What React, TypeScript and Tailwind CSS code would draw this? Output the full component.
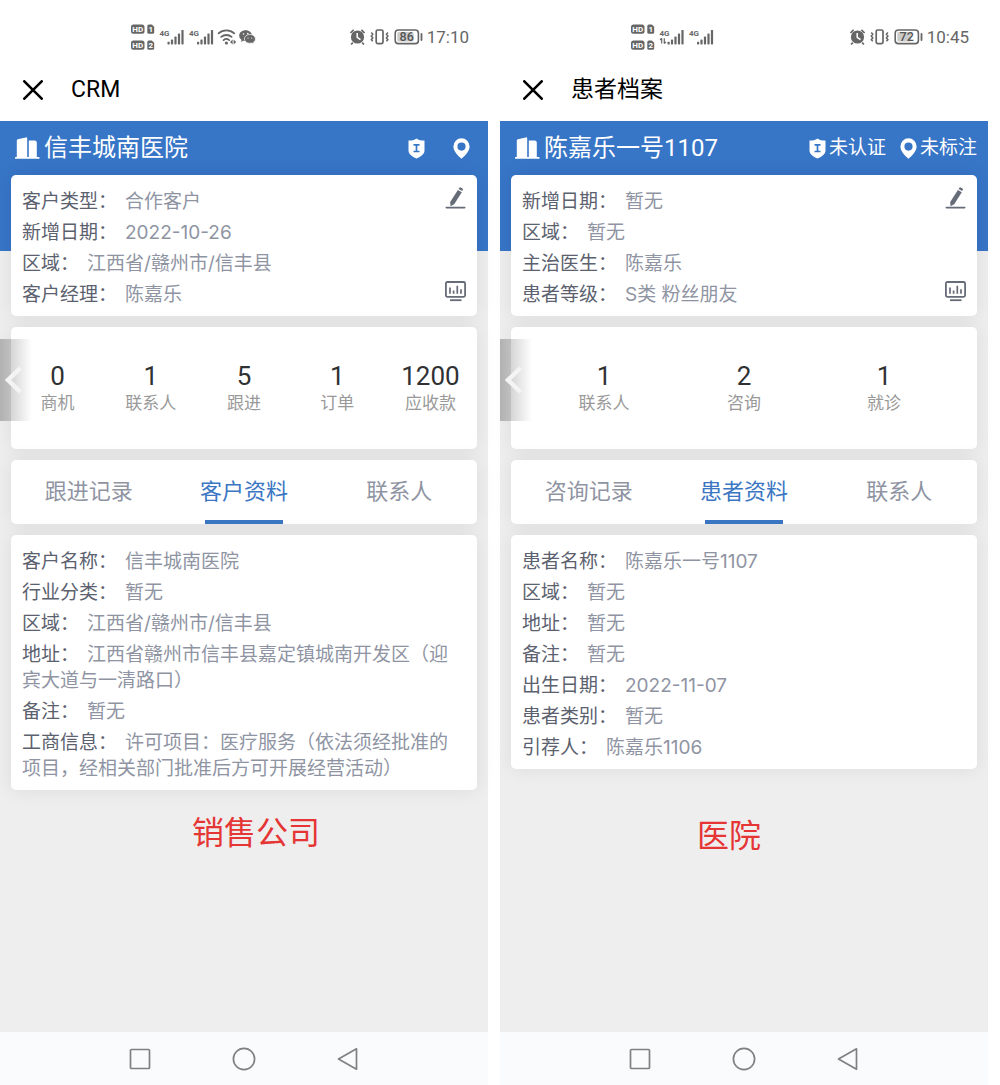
import type { ReactNode } from "react"
import { useState } from "react"

interface Field {
  label: string
  value: string
}

interface Stat {
  value: string
  label: string
}

interface PhoneData {
  time: string
  battery: number
  wifi: boolean
  uplink: boolean
  pageTitle: string
  name: string
  authLabel: string
  markLabel: string
  summary: Field[]
  stats: Stat[]
  tabs: string[]
  details: Field[]
  caption: string
}

const company: PhoneData = {
  time: "17:10",
  battery: 86,
  wifi: true,
  uplink: false,
  pageTitle: "CRM",
  name: "信丰城南医院",
  authLabel: "",
  markLabel: "",
  summary: [
    { label: "客户类型", value: "合作客户" },
    { label: "新增日期", value: "2022-10-26" },
    { label: "区域", value: "江西省/赣州市/信丰县" },
    { label: "客户经理", value: "陈嘉乐" },
  ],
  stats: [
    { value: "0", label: "商机" },
    { value: "1", label: "联系人" },
    { value: "5", label: "跟进" },
    { value: "1", label: "订单" },
    { value: "1200", label: "应收款" },
  ],
  tabs: ["跟进记录", "客户资料", "联系人"],
  details: [
    { label: "客户名称", value: "信丰城南医院" },
    { label: "行业分类", value: "暂无" },
    { label: "区域", value: "江西省/赣州市/信丰县" },
    { label: "地址", value: "江西省赣州市信丰县嘉定镇城南开发区（迎宾大道与一清路口）" },
    { label: "备注", value: "暂无" },
    {
      label: "工商信息",
      value: "许可项目：医疗服务（依法须经批准的项目，经相关部门批准后方可开展经营活动）",
    },
  ],
  caption: "销售公司",
}

const hospital: PhoneData = {
  time: "10:45",
  battery: 72,
  wifi: false,
  uplink: true,
  pageTitle: "患者档案",
  name: "陈嘉乐一号1107",
  authLabel: "未认证",
  markLabel: "未标注",
  summary: [
    { label: "新增日期", value: "暂无" },
    { label: "区域", value: "暂无" },
    { label: "主治医生", value: "陈嘉乐" },
    { label: "患者等级", value: "S类 粉丝朋友" },
  ],
  stats: [
    { value: "1", label: "联系人" },
    { value: "2", label: "咨询" },
    { value: "1", label: "就诊" },
  ],
  tabs: ["咨询记录", "患者资料", "联系人"],
  details: [
    { label: "患者名称", value: "陈嘉乐一号1107" },
    { label: "区域", value: "暂无" },
    { label: "地址", value: "暂无" },
    { label: "备注", value: "暂无" },
    { label: "出生日期", value: "2022-11-07" },
    { label: "患者类别", value: "暂无" },
    { label: "引荐人", value: "陈嘉乐1106" },
  ],
  caption: "医院",
}

function SimBadge({ y, slot }: { y: number; slot: string }) {
  return (
    <g>
      <rect x="1" y={y} width="13.5" height="9.4" rx="2.5" fill="#666" />
      <text x="7.8" y={y + 7.6} fontSize="8" fontWeight="700" fill="#fff" textAnchor="middle">
        HD
      </text>
      <path d={`M17.3 ${y + 1.5}q0-1.5 1.5-1.5h3l2.4 2.4v5.5q0 1.5-1.5 1.5h-3.9q-1.5 0-1.5-1.5z`} fill="#666" />
      <text x="20.7" y={y + 7.6} fontSize="8" fontWeight="700" fill="#fff" textAnchor="middle">
        {slot}
      </text>
    </g>
  )
}

function Signal({ x, uplink }: { x: number; uplink: boolean }) {
  return (
    <g fill="#666">
      <text x={x} y="14.6" fontSize="8" fontWeight="700">
        4G
      </text>
      {uplink && (
        <path
          d="M2.2 17.2v5.4M.6 19l1.6-1.8M4.800 17.200v5.400M6.400 20.800l-1.600 1.800"
          transform={`translate(${x} 0)`}
          stroke="#666"
          strokeWidth="1.200"
          fill="none"
        />
      )}
      <rect x={x + 8} y="20.8" width="2.2" height="2.6" rx="0.6" />
      <rect x={x + 11.4} y="18.4" width="2.2" height="5" rx="0.6" />
      <rect x={x + 14.9} y="15.6" width="2.2" height="7.8" rx="0.6" />
      <rect x={x + 18.4} y="12.4" width="2.2" height="11" rx="0.6" />
      <rect x={x + 21.9} y="9" width="2.2" height="14.4" rx="0.6" />
    </g>
  )
}

function NetworkIcons({ wifi, uplink }: { wifi: boolean; uplink: boolean }) {
  return (
    <svg width="130" height="32" viewBox="0 0 130 32" fill="none" aria-hidden="true">
      <SimBadge y={3.4} slot="1" />
      <SimBadge y={19.4} slot="2" />
      <Signal x={29.5} uplink={uplink} />
      <Signal x={59} uplink={false} />
      {wifi && (
        <g>
          <g stroke="#666" strokeWidth="1.8" strokeLinecap="round">
            <path d="M88.6 12.3a11.6 11.6 0 0 1 15.6 0" />
            <path d="M91.2 15.9a8 8 0 0 1 10.4 0" />
            <path d="M93.6 19.1a4.3 4.3 0 0 1 5.6 0" />
          </g>
          <circle cx="96.4" cy="22" r="1.6" fill="#666" />
          <path d="M102.6 18.6v5l-2.6-2.5zM103.6 18.6v5l2.6-2.5z" fill="#666" />
          <g fill="#666">
            <path d="M115.6 9.3c-3.6 0-6.4 2.4-6.4 5.4 0 1.7.9 3.2 2.4 4.2l-.6 2 2.3-1.2c.7.2 1.5.3 2.3.3 3.6 0 6.4-2.4 6.4-5.3s-2.8-5.4-6.4-5.4z" />
            <path
              d="M119.9 13.4c3.1 0 5.5 2 5.5 4.5 0 1.4-.8 2.7-2 3.5l.4 1.6-1.9-1c-.6.2-1.3.3-2 .3-3.1 0-5.5-2-5.5-4.4s2.4-4.5 5.500-4.500z"
              stroke="#fff"
              strokeWidth="0.7"
            />
          </g>
          <g fill="#fff">
            <circle cx="113.5" cy="13" r="0.8" />
            <circle cx="117.8" cy="12.6" r="0.8" />
            <circle cx="118" cy="17" r="0.6" />
            <circle cx="121.7" cy="17" r="0.6" />
          </g>
        </g>
      )}
    </svg>
  )
}

function DeviceIcons({ battery }: { battery: number }) {
  return (
    <svg width="76" height="20" viewBox="0 0 76 20" fill="none" aria-hidden="true">
      {/* Alarm clock */}
      <circle cx="8.5" cy="10" r="6.6" fill="#666" />
      <path
        d="M1.4 6l3.2-3.2M15.6 6l-3.2-3.2M3.8 15.600l-1.700 1.900M13.200 15.600l1.700 1.900"
        stroke="#666"
        strokeWidth="1.7"
      />
      <path d="M8.200 6v4.400l3.300 2.300" stroke="#fff" strokeWidth="1.5" />
      {/* Vibration */}
      <rect x="27.2" y="3" width="6.8" height="13.6" rx="1.5" stroke="#666" strokeWidth="1.7" />
      <path
        d="M22.300 5.500l1.500 1.800-1.500 1.800 1.500 1.800-1.500 1.800 1.500 1.600M38.900 5.500l-1.500 1.800 1.500 1.800-1.500 1.800 1.500 1.800-1.500 1.600"
        stroke="#666"
        strokeWidth="1.5"
      />
      {/* Battery */}
      <rect x="46.2" y="3" width="23.2" height="13.6" rx="3.2" stroke="#666" strokeWidth="1.6" />
      <rect x="48.3" y="5" width={(19 * battery) / 100} height="9.6" rx="1.5" fill="#ccc" />
      <path d="M72.500 7v6" stroke="#666" strokeWidth="1.8" strokeLinecap="round" />
      <text x="57.7" y="14.300" fontSize="12.5" fontWeight="500" fill="#555" textAnchor="middle">
        {battery}
      </text>
    </svg>
  )
}

function BuildingIcon() {
  return (
    <svg width="25" height="22" viewBox="0 0 25 22" fill="currentColor" className="shrink-0" aria-hidden="true">
      <path d="M1.800 3.500q0-1 1-1.200L10.800.4q1.400-.2 1.400 1V20.400H1.800z" />
      <path d="M13.800 3.600h5.800q2.200 0 2.200 2.200v14.600h-8z" />
      <rect x="0" y="20" width="24.5" height="1.7" rx="0.5" />
    </svg>
  )
}

function ShieldIcon() {
  return (
    <svg width="17" height="21" viewBox="0 0 17 21" aria-hidden="true">
      <path d="M8.500.4c2 1.500 4.600 2.100 8 2.200v9.600c0 3.900-3.400 6.300-8 8.300-4.600-2-8-4.400-8-8.300V2.600c3.400-.1 6-.7 8-2.200z" fill="#fff" />
      <path d="M5.500 6.800h6M5.500 13.500h6M8.500 6.800v6.700" stroke="#3775c7" strokeWidth="1.7" fill="none" />
    </svg>
  )
}

function PinIcon() {
  return (
    <svg width="17" height="21" viewBox="0 0 17 21" aria-hidden="true">
      <path
        d="M8.500.3a8.100 8.100 0 0 1 8.100 8.100c0 4.600-4.500 9-8.100 12.300C4.900 17.400.4 13 .4 8.400A8.100 8.100 0 0 1 8.500.3zm0 4.200a4.100 4.100 0 1 0 0 8.200 4.100 4.100 0 0 0 0-8.200z"
        fill="#fff"
        fillRule="evenodd"
      />
    </svg>
  )
}

function PencilIcon() {
  return (
    <svg width="21" height="22" viewBox="0 0 21 22" fill="#666b78" aria-hidden="true">
      <path d="M12.900 2.900l3.900 2.300-7.600 12.100-3.700 1.900-.3-4.100z" />
      <path d="M13.600 1.900l.8-1.200q.5-.7 1.300-.3l1.800 1.100q.8.500.3 1.300l-.6 1.300z" />
      <rect x="0.500" y="19.700" width="20" height="1.700" rx="0.800" />
    </svg>
  )
}

function ReportIcon() {
  return (
    <svg width="21" height="21" viewBox="0 0 21 21" fill="none" stroke="#666b78" aria-hidden="true">
      <rect x="0.900" y="1" width="19.200" height="14.800" rx="1.500" strokeWidth="1.8" />
      <path d="M5 6.500v6.300M8.600 9.500v3.300M12.300 4.700v8.100M16 8.200v4.600" strokeWidth="1.7" />
      <path d="M5 19.200h11.500" strokeWidth="1.8" />
    </svg>
  )
}

function Card({ className = "", children }: { className?: string; children: ReactNode }) {
  return (
    <section className={`relative rounded-[5px] bg-white shadow-[0_0_20px_rgba(0,0,0,0.08)] ${className}`}>
      {children}
    </section>
  )
}

function FieldList({ fields }: { fields: Field[] }) {
  return (
    <dl className="flex min-w-0 flex-1 flex-col gap-[5px] pt-0.5 font-['Inter','Noto_Sans_CJK_SC',sans-serif] text-[19px] leading-[26px]">
      {fields.map((field) => (
        <div key={field.label}>
          <dt className="mr-2 inline text-[#5b616e]">{field.label}：</dt>
          <dd className="inline text-[#8f94a3]">{field.value}</dd>
        </div>
      ))}
    </dl>
  )
}

function HeaderBadge({ icon, label, name }: { icon: ReactNode; label: string; name: string }) {
  return (
    <button aria-label={label || name} className={`flex items-center gap-[3px] ${label ? "" : "px-[7px]"}`}>
      {icon}
      {label && <span className="text-[19px] leading-[26px]">{label}</span>}
    </button>
  )
}

function Phone({ data, captionClass }: { data: PhoneData; captionClass: string }) {
  const [activeTab, setActiveTab] = useState(1)

  return (
    <div className="flex min-w-0 flex-col bg-[#eee]">
      {/* Status bar */}
      <div className="flex h-[58px] items-center justify-between bg-white pt-4 pr-[19px] pl-[130px] text-[#666]">
        <NetworkIcons wifi={data.wifi} uplink={data.uplink} />
        <div className="flex items-center gap-0.5">
          <DeviceIcons battery={data.battery} />
          <span className="text-[17px] leading-6">{data.time}</span>
        </div>
      </div>

      {/* Title bar */}
      <div className="flex h-[63px] items-center gap-7 bg-white pl-[23px] text-black">
        <button aria-label="关闭">
          <svg width="20" height="20" viewBox="0 0 20 20" stroke="currentColor" strokeWidth="2.6" strokeLinecap="round">
            <path d="M1.300 1.300l17.400 17.400M18.700 1.300L1.300 18.700" />
          </svg>
        </button>
        <h1 className="text-[23px] leading-8">{data.pageTitle}</h1>
      </div>

      <header className="bg-[#3775c7] pb-[76px] text-white">
        <div className="flex h-[54px] items-center justify-between pr-[11px] pl-[15px]">
          <div className="flex items-center gap-1">
            <BuildingIcon />
            <h2 className="text-[24px] leading-8">{data.name}</h2>
          </div>
          <div className="flex items-center gap-[14px]">
            <HeaderBadge icon={<ShieldIcon />} label={data.authLabel} name="认证" />
            <HeaderBadge icon={<PinIcon />} label={data.markLabel} name="标注" />
          </div>
        </div>
      </header>

      <main className="-mt-[76px] flex flex-1 flex-col gap-[11px] px-[11px]">
        <Card className="flex px-[11px] pt-3 pb-2">
          <FieldList fields={data.summary} />
          <div className="flex flex-col justify-between pb-1.5">
            <button aria-label="编辑">
              <PencilIcon />
            </button>
            <button aria-label="报表">
              <ReportIcon />
            </button>
          </div>
        </Card>

        <Card className={`flex pt-[35px] pb-[34px] ${data.stats.length === 3 ? "px-[23px]" : ""}`}>
          {data.stats.map((stat) => (
            <div key={stat.label} className="flex flex-1 flex-col items-center gap-px">
              <span className="text-[26px] leading-7 text-[#303133]">{stat.value}</span>
              <span className="text-[17px] leading-6 text-[#999]">{stat.label}</span>
            </div>
          ))}
          {/* Drawer handle over the left edge */}
          <button
            aria-label="返回"
            className="absolute top-3 -left-[11px] flex h-[82px] w-8 items-center bg-linear-to-r from-black/25 to-transparent pl-[5px]"
          >
            <svg width="18" height="28" viewBox="0 0 18 28" fill="none" stroke="#f4f4f4" strokeWidth="4.500">
              <path d="M15.500 2L3 14l12.500 12" />
            </svg>
          </button>
        </Card>

        <Card className="grid h-16 grid-cols-3">
          {data.tabs.map((tab, index) => (
            <button
              key={tab}
              onClick={() => setActiveTab(index)}
              className={`relative text-[22px] leading-8 ${index === activeTab ? "text-[#3b76c3]" : "text-[#8f94a3]"}`}
            >
              {tab}
              {index === activeTab && <span className="absolute bottom-0 left-1/4 h-1 w-1/2 bg-[#3b76c3]" />}
            </button>
          ))}
        </Card>

        <Card className="flex px-[11px] pt-3 pb-2">
          <FieldList fields={data.details} />
        </Card>

        <p className={`text-center text-[32px] leading-10 text-[#e53535] ${captionClass}`}>{data.caption}</p>
      </main>

      {/* System navigation */}
      <nav className="flex h-[53px] items-center justify-center gap-20 bg-[#fafbfd]">
        <button aria-label="最近任务">
          <svg width="24" height="24" viewBox="0 0 24 24" fill="none" stroke="#808080" strokeWidth="1.7">
            <rect x="2.500" y="2.500" width="19" height="19" rx="1" />
          </svg>
        </button>
        <button aria-label="主页">
          <svg width="24" height="24" viewBox="0 0 24 24" fill="none" stroke="#808080" strokeWidth="1.7">
            <circle cx="12" cy="12" r="10.600" />
          </svg>
        </button>
        <button aria-label="后退">
          <svg width="24" height="24" viewBox="0 0 24 24" fill="none" stroke="#808080" strokeWidth="1.7" strokeLinejoin="round">
            <path d="M20.500 1.800v20.400L2.500 12z" />
          </svg>
        </button>
      </nav>
    </div>
  )
}

export default function App() {
  return (
    <div className="grid min-h-screen grid-cols-2 gap-3 bg-white pr-3 font-['Roboto','Noto_Sans_CJK_SC',sans-serif]">
      <Phone data={company} captionClass="mt-3 pl-6" />
      <Phone data={hospital} captionClass="mt-9 pr-[30px]" />
    </div>
  )
}
